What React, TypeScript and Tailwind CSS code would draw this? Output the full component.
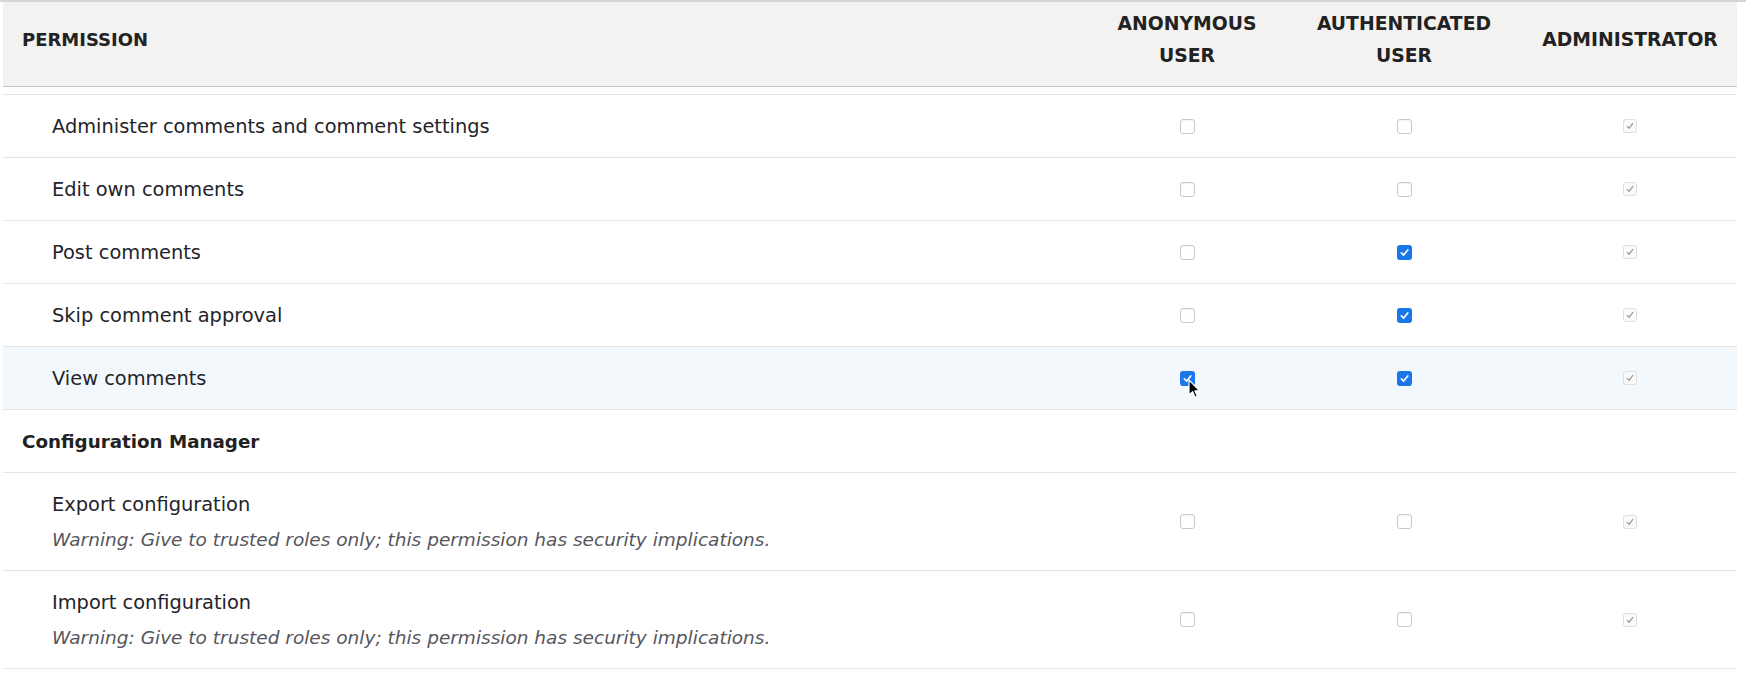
import React from "react";

type Perm = {
  title: string;
  warning?: boolean;
  anon: boolean;
  auth: boolean;
  hover?: boolean;
};

type Section = { name?: string; perms: Perm[] };

const SECTIONS: Section[] = [
  {
    perms: [
      { title: "Administer comments and comment settings", anon: false, auth: false },
      { title: "Edit own comments", anon: false, auth: false },
      { title: "Post comments", anon: false, auth: true },
      { title: "Skip comment approval", anon: false, auth: true },
      { title: "View comments", anon: true, auth: true, hover: true },
    ],
  },
  {
    name: "Configuration Manager",
    perms: [
      { title: "Export configuration", warning: true, anon: false, auth: false },
      { title: "Import configuration", warning: true, anon: false, auth: false },
    ],
  },
];

const COLS = "grid grid-cols-[1fr_196px_238px_214px]";

function Checkbox({ checked, disabled }: { checked: boolean; disabled?: boolean }) {
  if (disabled) {
    return (
      <span className="flex h-[14px] w-[14px] items-center justify-center rounded-[3px] border border-[#dedede] bg-[#fbfbfb]">
        <svg viewBox="0 0 12 12" className="h-[10px] w-[10px]">
          <path d="M2.6 6.4 L4.9 8.7 L9.4 2.8" fill="none" stroke="#9b9b9b" strokeWidth="1.5" strokeLinecap="round" strokeLinejoin="round" />
        </svg>
      </span>
    );
  }
  if (checked) {
    return (
      <span className="flex h-[15px] w-[15px] items-center justify-center rounded-[3px] bg-[#1b76ea]">
        <svg viewBox="0 0 12 12" className="h-[11px] w-[11px]">
          <path d="M2.5 6.3 L5 8.8 L9.6 3.2" fill="none" stroke="#ffffff" strokeWidth="1.8" strokeLinecap="round" strokeLinejoin="round" />
        </svg>
      </span>
    );
  }
  return (
    <span className="block h-[15px] w-[15px] rounded-[3px] border border-[#c9c9c9] bg-white shadow-[inset_0_1px_1px_rgba(0,0,0,0.04)]" />
  );
}

function Cursor() {
  return (
    <svg
      viewBox="0 0 13 20"
      className="pointer-events-none absolute left-[calc(50%+1px)] top-[calc(50%+1px)] h-[20px] w-[13px]"
    >
      <path
        d="M1 1 L1 16 L4.6 12.6 L7.2 18.4 L9.4 17.4 L6.9 11.8 L11.6 11.8 Z"
        fill="#000"
        stroke="#fff"
        strokeWidth="1.2"
        strokeLinejoin="round"
      />
    </svg>
  );
}

function PermRow({ perm }: { perm: Perm }) {
  return (
    <div
      className={`${COLS} border-b border-[#e5e4e1] ${perm.hover ? "bg-[#f2f8fc]" : "bg-white"}`}
    >
      <div className="pb-[16px] pl-[49px] pt-[18px]">
        <div className="text-[19.4px] leading-[28px] text-[#232429]">{perm.title}</div>
        {perm.warning && (
          <div className="mt-[7px] text-[18.5px] italic leading-[28px] text-[#55565c]">
            Warning: Give to trusted roles only; this permission has security implications.
          </div>
        )}
      </div>
      <div className="flex items-center justify-center">
        <span className="relative">
          <Checkbox checked={perm.anon} />
          {perm.hover && <Cursor />}
        </span>
      </div>
      <div className="flex items-center justify-center">
        <Checkbox checked={perm.auth} />
      </div>
      <div className="flex items-center justify-center">
        <Checkbox checked disabled />
      </div>
    </div>
  );
}

export default function App() {
  return (
    <div className="min-h-[676px] w-full bg-white font-['DejaVu_Sans',sans-serif] text-[#222330]">
      <div className="h-[2px] w-full bg-[#d6d6d6]" />
      <div className="pl-[3px] pr-[9px]">
        {/* Sticky header */}
        <div className={`${COLS} h-[85px] items-center border-b border-[#c2c1be] bg-[#f3f2f1] pb-[8px] text-[18.8px] font-bold uppercase leading-[32px] text-[#222]`}>
          <div className="pl-[19px] text-[18px]">Permission</div>
          <div className="text-center">
            Anonymous
            <br />
            User
          </div>
          <div className="text-center">
            Authenticated
            <br />
            User
          </div>
          <div className="text-center">Administrator</div>
        </div>

        <div className="mt-[7px] border-t border-[#e5e4e1]">
          {SECTIONS.map((section, i) => (
            <div key={i}>
              {section.name && (
                <div className="border-b border-[#e5e4e1] pb-[16px] pl-[19px] pt-[18px] text-[18.3px] font-bold leading-[28px] text-[#222]">
                  {section.name}
                </div>
              )}
              {section.perms.map((perm) => (
                <PermRow key={perm.title} perm={perm} />
              ))}
            </div>
          ))}
        </div>
      </div>
    </div>
  );
}
